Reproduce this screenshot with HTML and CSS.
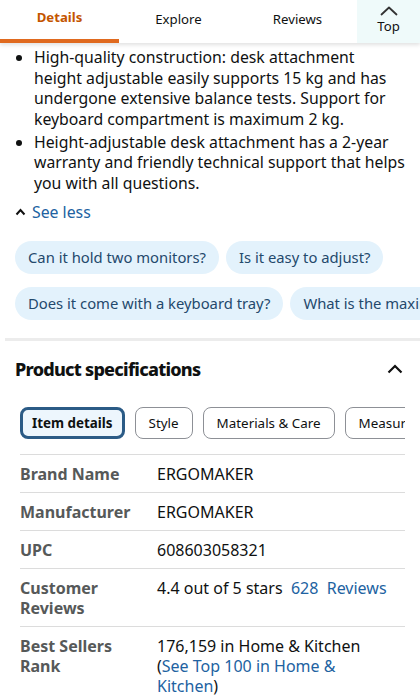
FILE: index.html
```html
<!DOCTYPE html>
<html>
<head>
<meta charset="utf-8">
<link rel="stylesheet" href="styles.css">
</head>
<body>
<header class="nav">
  <div class="tab active">Details</div>
  <div class="tab">Explore</div>
  <div class="tab">Reviews</div>
  <div class="top">
    <svg class="top-icon" width="18" height="10" viewBox="0 0 18 10"><path d="M1.5 8.5 L9 1.5 L16.5 8.5" fill="none" stroke="#333" stroke-width="1.8" stroke-linecap="round" stroke-linejoin="round"/></svg>
    <span>Top</span>
  </div>
</header>
<main class="content">
  <ul class="bullets">
    <li>High-quality construction: desk attachment height adjustable easily supports 15 kg and has undergone extensive balance tests. Support for keyboard compartment is maximum 2 kg.</li>
    <li>Height-adjustable desk attachment has a 2-year warranty and friendly technical support that helps you with all questions.</li>
  </ul>
  <div class="see-less">
    <svg width="11" height="8" viewBox="0 0 11 8"><path d="M1.5 6.5 L5.5 2 L9.5 6.5" fill="none" stroke="#111" stroke-width="2"/></svg>
    <span>See less</span>
  </div>
  <div class="chips">
    <div class="chip-row">
      <span class="chip">Can it hold two monitors?</span>
      <span class="chip">Is it easy to adjust?</span>
    </div>
    <div class="chip-row">
      <span class="chip">Does it come with a keyboard tray?</span>
      <span class="chip">What is the maximum weight capacity?</span>
    </div>
  </div>
</main>
<div class="divider"></div>
<section class="specs">
  <div class="specs-head">
    <h2>Product specifications</h2>
    <svg width="16" height="10" viewBox="0 0 16 10"><path d="M1.5 8.5 L8 2 L14.5 8.5" fill="none" stroke="#111" stroke-width="2.2"/></svg>
  </div>
  <div class="spec-tabs">
    <span class="spec-tab selected">Item details</span>
    <span class="spec-tab">Style</span>
    <span class="spec-tab">Materials &amp; Care</span>
    <span class="spec-tab">Measurements</span>
  </div>
  <table class="spec-table">
    <tr><th>Brand Name</th><td>ERGOMAKER</td></tr>
    <tr><th>Manufacturer</th><td>ERGOMAKER</td></tr>
    <tr><th>UPC</th><td>608603058321</td></tr>
    <tr><th>Customer Reviews</th><td>4.4 out of 5 stars&nbsp; <a class="link">628&nbsp; Reviews</a></td></tr>
    <tr><th>Best Sellers Rank</th><td>176,159 in Home &amp; Kitchen<br>(<a class="link">See Top 100 in Home &amp; Kitchen</a>)</td></tr>
  </table>
</section>
</body>
</html>
```
FILE: styles.css
```css
* { box-sizing: border-box; }
html, body { margin: 0; padding: 0; }
body {
  width: 420px;
  height: 699px;
  overflow: hidden;
  background: #fff;
  font-family: "Noto Sans", "Liberation Sans", sans-serif;
  color: #0f1111;
}
.nav {
  display: flex;
  height: 43px;
  box-shadow: 0 2px 4px rgba(0,0,0,0.12);
  position: relative;
  z-index: 1;
}
.tab {
  width: 119px;
  display: flex;
  align-items: center;
  justify-content: center;
  font-size: 13.2px;
  color: #0f1111;
  padding-bottom: 2px;
  border-bottom: 4px solid transparent;
}
.tab.active {
  color: #c45500;
  font-weight: 700;
  border-bottom-color: #e06a1f;
  padding-bottom: 6px;
}
.top {
  flex: 1;
  background: #effafa;
  display: flex;
  flex-direction: column;
  align-items: center;
  justify-content: center;
  font-size: 13.2px;
  padding-bottom: 2px;
}
.top-icon { margin-bottom: 1px; }
.content { padding: 4px 0 0 0; }
.bullets {
  margin: 0;
  padding: 0 15px 0 34px;
  font-size: 15.8px;
  line-height: 20.5px;
}
.bullets li { margin-bottom: 2.5px; }
.see-less {
  display: flex;
  align-items: center;
  gap: 6px;
  margin: 8px 0 0 15px;
  font-size: 15.8px;
  color: #2162a1;
}
.chips {
  display: flex;
  flex-direction: column;
  gap: 13px;
  margin-top: 18px;
  overflow: hidden;
  padding-left: 15px;
}
.chip-row { display: flex; gap: 7px; white-space: nowrap; }
.chip {
  flex: none;
  height: 33px;
  line-height: 33px;
  padding: 0 13px;
  border-radius: 17px;
  background: #e3f2fc;
  color: #24496c;
  font-size: 14.8px;
}
.divider {
  height: 3px;
  background: #ececec;
  margin: 18px 0 0 5px;
}
.specs { padding: 0 15px; }
.specs-head {
  display: flex;
  justify-content: space-between;
  align-items: center;
  height: 56px;
  padding-right: 2px;
}
.specs-head h2 {
  margin: 0;
  font-size: 18px;
  font-weight: 800;
  letter-spacing: -0.75px;
}
.spec-tabs {
  display: flex;
  gap: 10px;
  margin: 10px 0 0 5px;
  width: 385px;
  overflow: hidden;
  white-space: nowrap;
}
.spec-tab {
  flex: none;
  height: 32px;
  line-height: 30px;
  padding: 0 13px;
  border: 1px solid #8d9096;
  border-radius: 8px;
  font-size: 13.4px;
}
.spec-tab.selected {
  border: 3px solid #2b5b86;
  background: #edf6fd;
  line-height: 26px;
  font-weight: 700;
  padding: 0 9px;
}
.spec-table {
  margin: 15px 0 0 5px;
  width: 385px;
  border-collapse: collapse;
  font-size: 16px;
  line-height: 20px;
}
.spec-table tr { border-top: 1px solid #dcdcdc; }
.spec-table th {
  width: 137px;
  text-align: left;
  vertical-align: top;
  color: #565959;
  font-weight: 700;
  padding: 8.5px 10px 8.5px 0;
}
.spec-table td {
  vertical-align: top;
  padding: 8.5px 6px 8.5px 0;
}
.link { color: #2162a1; }
```
